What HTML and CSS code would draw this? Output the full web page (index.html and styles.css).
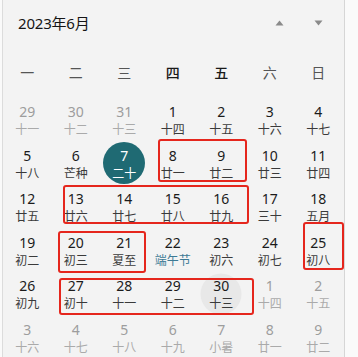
FILE: index.html
```html
<!DOCTYPE html>
<html lang="zh-CN">
<head>
<meta charset="utf-8">
<title>日历</title>
<link rel="stylesheet" href="styles.css">
</head>
<body>
<div class="panel">
  <div class="header">
    <div class="title">2023年6月</div>
    <button class="nav" aria-label="上一月"><svg width="9" height="6" viewBox="0 0 9 6"><path d="M4.5 0.5 L8.5 5.5 L0.5 5.5 Z" fill="#8a8a8a"/></svg></button>
    <button class="nav" aria-label="下一月"><svg width="9" height="6" viewBox="0 0 9 6"><path d="M0.5 0.5 L8.5 0.5 L4.5 5.5 Z" fill="#8a8a8a"/></svg></button>
  </div>
  <div class="weekdays">
    <span>一</span><span>二</span><span>三</span><span class="dark">四</span><span class="dark">五</span><span>六</span><span>日</span>
  </div>
  <div class="days">
    <div class="cell out"><span class="n">29</span><span class="l">十一</span></div>
    <div class="cell out"><span class="n">30</span><span class="l">十二</span></div>
    <div class="cell out"><span class="n">31</span><span class="l">十三</span></div>
    <div class="cell"><span class="n">1</span><span class="l">十四</span></div>
    <div class="cell"><span class="n">2</span><span class="l">十五</span></div>
    <div class="cell"><span class="n">3</span><span class="l">十六</span></div>
    <div class="cell"><span class="n">4</span><span class="l">十七</span></div>

    <div class="cell"><span class="n">5</span><span class="l">十八</span></div>
    <div class="cell"><span class="n">6</span><span class="l">芒种</span></div>
    <div class="cell today"><span class="n">7</span><span class="l">二十</span></div>
    <div class="cell"><span class="n">8</span><span class="l">廿一</span></div>
    <div class="cell"><span class="n">9</span><span class="l">廿二</span></div>
    <div class="cell"><span class="n">10</span><span class="l">廿三</span></div>
    <div class="cell"><span class="n">11</span><span class="l">廿四</span></div>

    <div class="cell"><span class="n">12</span><span class="l">廿五</span></div>
    <div class="cell"><span class="n">13</span><span class="l">廿六</span></div>
    <div class="cell"><span class="n">14</span><span class="l">廿七</span></div>
    <div class="cell"><span class="n">15</span><span class="l">廿八</span></div>
    <div class="cell"><span class="n">16</span><span class="l">廿九</span></div>
    <div class="cell"><span class="n">17</span><span class="l">三十</span></div>
    <div class="cell"><span class="n">18</span><span class="l">五月</span></div>

    <div class="cell"><span class="n">19</span><span class="l">初二</span></div>
    <div class="cell"><span class="n">20</span><span class="l">初三</span></div>
    <div class="cell"><span class="n">21</span><span class="l">夏至</span></div>
    <div class="cell"><span class="n">22</span><span class="l fest">端午节</span></div>
    <div class="cell"><span class="n">23</span><span class="l">初六</span></div>
    <div class="cell"><span class="n">24</span><span class="l">初七</span></div>
    <div class="cell"><span class="n">25</span><span class="l">初八</span></div>

    <div class="cell"><span class="n">26</span><span class="l">初九</span></div>
    <div class="cell"><span class="n">27</span><span class="l">初十</span></div>
    <div class="cell"><span class="n">28</span><span class="l">十一</span></div>
    <div class="cell"><span class="n">29</span><span class="l">十二</span></div>
    <div class="cell hover"><span class="n">30</span><span class="l">十三</span></div>
    <div class="cell out"><span class="n">1</span><span class="l">十四</span></div>
    <div class="cell out"><span class="n">2</span><span class="l">十五</span></div>

    <div class="cell out"><span class="n">3</span><span class="l">十六</span></div>
    <div class="cell out"><span class="n">4</span><span class="l">十七</span></div>
    <div class="cell out"><span class="n">5</span><span class="l">十八</span></div>
    <div class="cell out"><span class="n">6</span><span class="l">十九</span></div>
    <div class="cell out"><span class="n">7</span><span class="l">小暑</span></div>
    <div class="cell out"><span class="n">8</span><span class="l">廿一</span></div>
    <div class="cell out"><span class="n">9</span><span class="l">廿二</span></div>
  </div>

  <div class="mark m-a"></div>
  <div class="mark m-b"></div>
  <div class="mark m-c"></div>
  <div class="mark m-d"></div>
  <div class="mark m-e"></div>
</div>
</body>
</html>
```

FILE: styles.css
```css
html, body {
  margin: 0;
  padding: 0;
}
body {
  background: #fafafa;
  font-family: "Noto Sans", "Noto Sans CJK SC", sans-serif;
  overflow: hidden;
  height: 357px;
}
.panel {
  position: relative;
  margin-left: 2px;
  width: 341px;
  height: 357px;
  background: #f3f3f3;
  border-left: 1px solid #dcdcdc;
  border-right: 1px solid #d6d6d6;
}
.header {
  display: flex;
  align-items: center;
  height: 46px;
  padding: 0 6px 0 15px;
}
.title {
  flex: 1;
  font-size: 15px;
  line-height: 22px;
  color: #151515;
  letter-spacing: -0.2px;
}
.nav {
  width: 39px;
  height: 30px;
  border: 0;
  background: transparent;
  padding: 0;
  display: flex;
  align-items: center;
  justify-content: center;
}
.nav svg {
  display: block;
}
.weekdays {
  display: grid;
  grid-template-columns: repeat(7, 48.5px);
  height: 52px;
  align-items: center;
  font-family: "Noto Sans CJK SC", sans-serif;
  font-size: 14px;
  color: #555;
  text-align: center;
}
.weekdays .dark {
  color: #1a1a1a;
  font-weight: 500;
}
.days {
  display: grid;
  grid-template-columns: repeat(7, 48.5px);
  grid-auto-rows: 43.5px;
}
.cell {
  display: flex;
  flex-direction: column;
  align-items: center;
  justify-content: center;
  position: relative;
}
.cell .n {
  font-size: 14px;
  line-height: 19px;
  height: 18px;
  color: #1b1b1b;
  position: relative;
}
.cell .l {
  font-family: "Noto Sans CJK SC", sans-serif;
  font-size: 12px;
  line-height: 17px;
  height: 17px;
  color: #3a3a3a;
  position: relative;
}
.cell .l.fest {
  color: #3d7a95;
}
.cell.out .n {
  color: #9d9d9d;
}
.cell.out .l {
  color: #aaaaaa;
}
.cell.today::before,
.cell.hover::before {
  content: "";
  position: absolute;
  width: 42px;
  height: 42px;
  border-radius: 50%;
  left: 50%;
  top: 50%;
  transform: translate(-50%, -50%);
}
.cell.today::before {
  background: #1f6a73;
}
.cell.hover::before {
  background: #e8e8e8;
  width: 41px;
  height: 41px;
}
.cell.today .n,
.cell.today .l {
  color: #ffffff;
}
.mark {
  position: absolute;
  border: 2px solid #e5261d;
  border-radius: 3px;
  box-sizing: border-box;
}
.m-a { left: 155px; top: 139px; width: 89px; height: 43px; }
.m-b { left: 60px;  top: 185px; width: 186px; height: 39px; }
.m-c { left: 55px;  top: 231px; width: 88px; height: 42px; }
.m-d { left: 300px; top: 222px; width: 41px; height: 48px; }
.m-e { left: 56px;  top: 278px; width: 195px; height: 37px; }
```
